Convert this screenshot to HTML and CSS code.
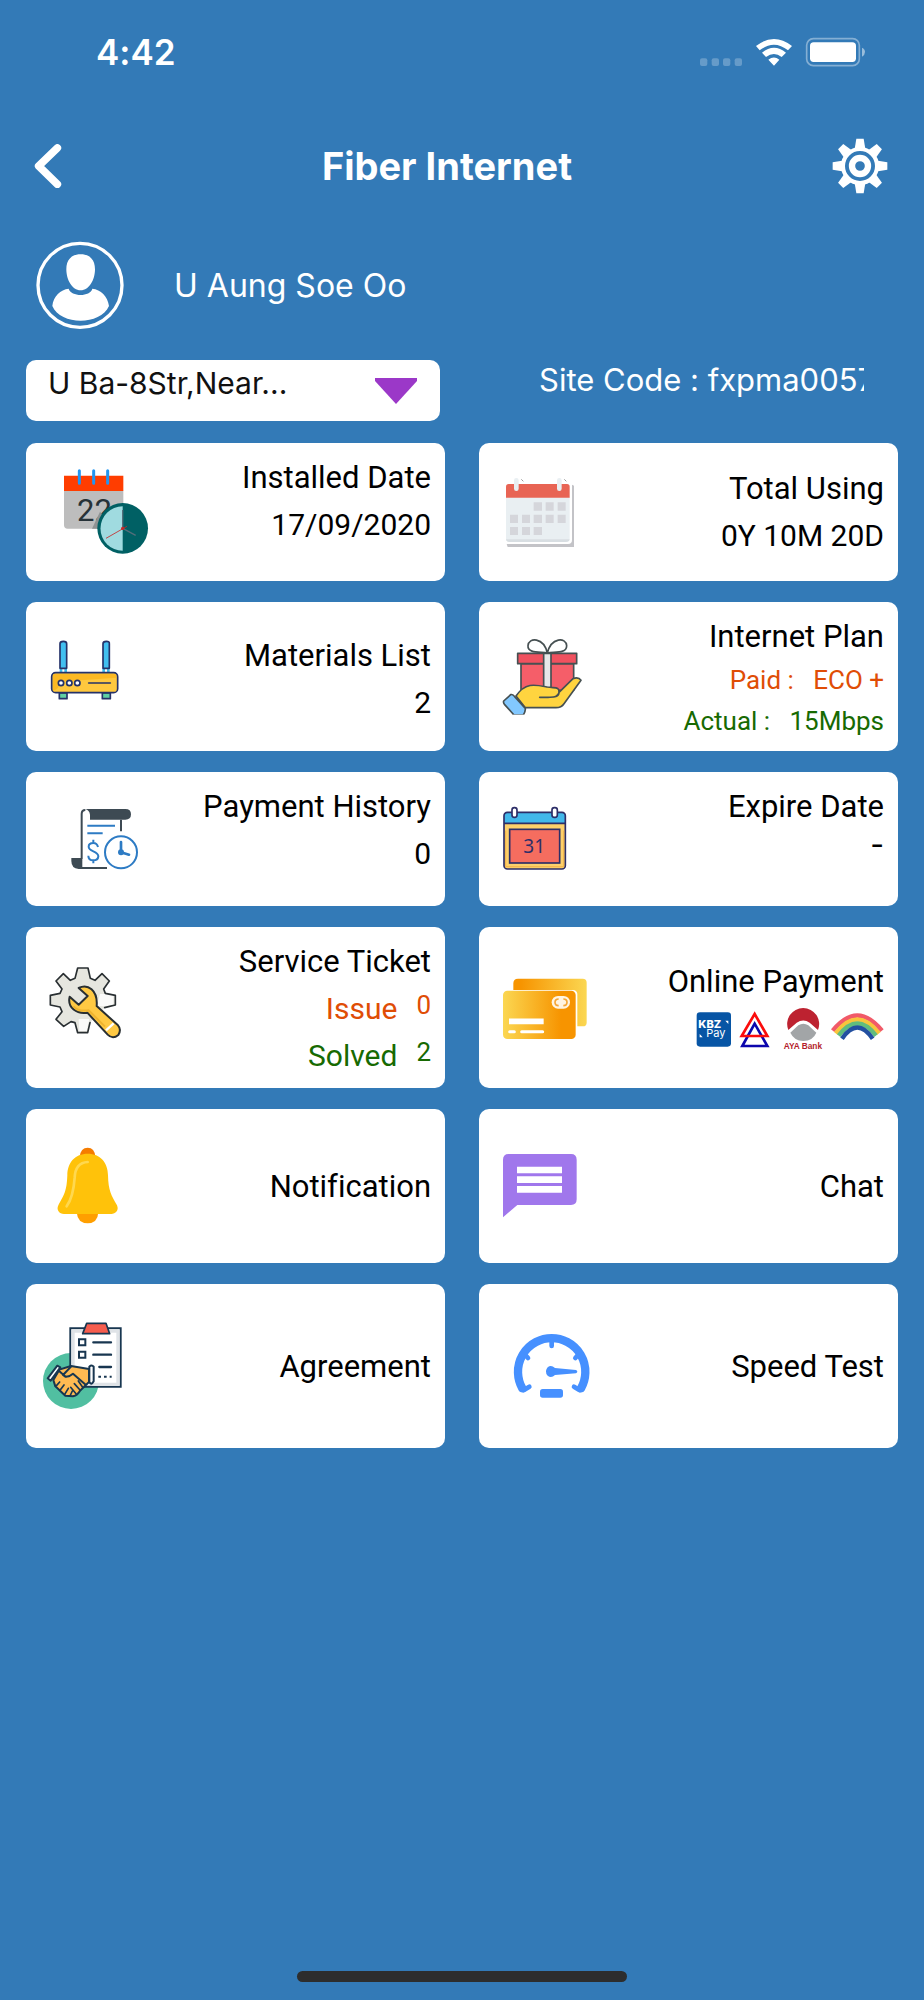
FILE: index.html
```html
<!DOCTYPE html>
<html lang="en">
<head>
<meta charset="utf-8">
<meta name="viewport" content="width=device-width, initial-scale=1">
<title>Fiber Internet</title>
<link rel="stylesheet" href="styles.css">
</head>
<body>
<div class="status">
  <span class="clock">4:42</span>
  <svg class="status-icons" viewBox="714 111 498 90" aria-hidden="true">
    <g fill="#fff" fill-opacity=".25"><rect x="714" y="175" width="22" height="23" rx="6"/><rect x="749" y="175" width="22" height="23" rx="6"/><rect x="783" y="175" width="22" height="23" rx="6"/><rect x="818" y="175" width="22" height="23" rx="6"/></g>
    <path fill="#fff" d="M882 138Q936 96 990 138L978 151Q936 117 893 151ZM900 158Q936 129 972 158L959 171Q936 153 912 171ZM919 179Q936 166 952 179L936 197Z"/>
    <rect x="1034" y="116" width="158" height="81" rx="20" fill="none" stroke="#fff" stroke-opacity=".4" stroke-width="5"/>
    <rect x="1044" y="127" width="138" height="59" rx="11" fill="#fff"/>
    <path fill="#fff" fill-opacity=".5" d="M1200 143Q1209 147 1209 156T1200 170Z"/>
  </svg>
</div>

<header class="header">
  <button class="icon-button back" type="button" aria-label="Back">
    <svg viewBox="102 432 84 134"><path d="M172 444L116 498L172 553" fill="none" stroke="#fff" stroke-width="23" stroke-linecap="round" stroke-linejoin="round"/></svg>
  </button>
  <h1 class="title">Fiber Internet</h1>
  <button class="icon-button settings" type="button" aria-label="Settings">
    <svg viewBox="-84 -84 168 168">
      <defs><path id="tooth" d="M-17 -45L-11 -82H11L17 -45Z"/></defs>
      <g fill="#fff"><use href="#tooth"/><use href="#tooth" transform="rotate(45)"/><use href="#tooth" transform="rotate(90)"/><use href="#tooth" transform="rotate(135)"/><use href="#tooth" transform="rotate(180)"/><use href="#tooth" transform="rotate(225)"/><use href="#tooth" transform="rotate(270)"/><use href="#tooth" transform="rotate(315)"/></g>
      <circle r="51" fill="#337ab7" stroke="#fff" stroke-width="12"/>
      <circle r="24" fill="none" stroke="#fff" stroke-width="19"/>
    </svg>
  </button>
</header>

<main class="main">
  <section class="profile">
    <svg class="avatar" viewBox="106 722 264 264" aria-hidden="true">
      <circle cx="238" cy="855" r="126" fill="none" stroke="#fff" stroke-width="10"/>
      <path fill="#fff" d="M240 762C269 762 283 780 283 807C283 838 266 870 240 870S197 838 197 807C197 780 211 762 240 762ZM204 865C211 890 269 890 275 865C300 868 321 887 325 917C299 976 180 976 155 917C158 887 180 868 204 865Z"/>
    </svg>
    <span class="name">U Aung Soe Oo</span>
  </section>

  <section class="site">
    <div class="select-wrap">
      <select class="select" aria-label="Site address"><option>U Ba-8Str,Near...</option></select>
      <svg class="caret" viewBox="0 0 42 26" aria-hidden="true"><path d="M0 0H42V3L21 26L0 3Z" fill="#9b38c8"/></svg>
    </div>
    <p class="code">Site Code : fxpma0057</p>
  </section>

  <section class="grid">
    <a class="card row-1 top" href="#installed">
      <svg class="art" viewBox="108 336 360 360" aria-hidden="true">
        <path d="M192 452H370V566H203Q192 566 192 555Z" fill="#bdbdbd"/>
        <path d="M192 407H370V453H192Z" fill="#ff3d00"/>
        <path d="M238 392V430M281 392V430M323 392V430" stroke="#2196f3" stroke-width="9" stroke-linecap="round"/>
        <text x="231" y="542" font-size="93" fill="#263238" class="roboto">22</text>
        <path d="M276 566L300 515L340 566Z" fill="#8f9293"/>
        <circle cx="368" cy="565" r="76" fill="#006064"/>
        <path d="M368 499A66 66 0 0 0 368 632Z" fill="#a0dbe0"/>
        <path d="M368 510V565L407 586" fill="none" stroke="#546e7a" stroke-width="4"/>
        <path d="M318 595L381 559" stroke="#c62828" stroke-width="2.500"/><circle cx="368" cy="565" r="5" fill="#c62828"/>
      </svg>
      <div class="info"><span class="label">Installed Date</span><span>17/09/2020</span></div>
    </a>

    <a class="card row-1" href="#total">
      <svg class="art" viewBox="81 336 360 360" aria-hidden="true">
        <path d="M134 612H318Q330 612 330 600V434L336 437V621H137Z" fill="#c3c3c7"/>
        <path d="M132 470H323V595Q323 606 311 606H143Q132 606 132 595Z" fill="#e9eff2"/>
        <path d="M132 598H323Q322 606 311 606H143Q133 606 132 598Z" fill="#d8dee2"/>
        <path d="M132 473V440Q132 432 140 432H315Q323 432 323 440V473Z" fill="#e86454"/>
        <path d="M163 421V446M292 421V446" stroke="#e9eff2" stroke-width="14" stroke-linecap="round"/>
        <path d="M178 418L184 424M307 418L313 424" stroke="#999" stroke-width="3"/>
        <path fill="#d5d6db" d="M215 487h25v25h-25zM251 487h24v25h-24zM287 487h24v25h-24zM144 524h24v25h-24zM180 524h24v25h-24zM215 524h25v25h-25zM251 524h24v25h-24zM287 524h24v25h-24zM144 561h24v24h-24zM180 561h24v24h-24zM215 561h25v24h-25z"/>
      </svg>
      <div class="info"><span class="label">Total Using</span><span>0Y 10M 20D</span></div>
    </a>

    <a class="card row-2" href="#materials">
      <svg class="art" viewBox="108 80 360 360" aria-hidden="true">
        <g stroke="#253269" stroke-width="5" stroke-linejoin="round">
          <path d="M183 234V245M197 234V245M311 234V245M325 234V245" stroke="#41bff0" stroke-width="8"/>
          <path d="M180 234V160Q180 153 190 153T200 160V234ZM309 234V160Q309 153 319 153T328 160V234Z" fill="#41bff0"/>
          <path d="M178 308H201V325H178ZM307 308H331V325H307Z" fill="#5fd0a3"/>
          <rect x="155" y="247" width="198" height="60" rx="12" fill="#ffc83e"/>
          <path d="M159 300V255Q160 251 166 251H348V262L180 274Q179 296 159 301Z" fill="#fbb51d" stroke="none" opacity=".8"/>
          <g fill="#fff"><circle cx="183" cy="278" r="8"/><circle cx="208" cy="278" r="8"/><circle cx="232" cy="278" r="8"/></g>
          <path d="M266 278H331" stroke-linecap="round"/>
        </g>
      </svg>
      <div class="info low"><span class="label">Materials List</span><span>2</span></div>
    </a>

    <a class="card row-2" href="#plan">
      <svg class="art" viewBox="81 80 360 360" aria-hidden="true">
        <g stroke="#465052" stroke-width="5" stroke-linejoin="round" stroke-linecap="round">
          <path d="M256 188C245 140 200 140 198 166C196 190 235 184 256 188C268 140 312 140 314 166C314 190 280 184 256 188Z" fill="#fff"/>
          <path d="M177 220H335V300H177Z" fill="#f55e69"/>
          <path d="M167 189H344V220H167Z" fill="#f0515f"/>
          <path d="M245 189H267V300H245Z" fill="#e6e7e8"/>
          <path d="M162 317C190 275 220 283 256 290C280 294 292 288 291 306C290 322 272 320 258 321H233H258C272 320 287 322 291 306L333 265Q349 258 357 270L306 340Q298 352 282 352H190Z" fill="#ffd43f"/>
          <path d="M125 332L146 313Q153 311 158 319L190 354Q191 362 184 374H156L128 343Q123 337 125 332Z" fill="#82c8ff"/>
        </g>
        <path d="M153 375H190" stroke="#fff" stroke-width="4"/>
      </svg>
      <div class="info high"><span class="label">Internet Plan</span><span class="small paid">Paid : &nbsp; ECO +</span><span class="small ok">Actual : &nbsp; 15Mbps</span></div>
    </a>

    <a class="card row-3 top" href="#history">
      <svg class="art" viewBox="108 567 360 360" aria-hidden="true">
        <path d="M256 657H376Q393 657 393 673T376 689H270V674Q268 660 256 657Z" fill="#3d4a53"/>
        <path d="M245 806V672Q245 660 256 660M363 689V724M236 834H321" fill="none" stroke="#3d4a53" stroke-width="6"/>
        <path d="M214 804H247V837H236Q214 835 214 813Z" fill="#3d4a53"/>
        <g fill="none" stroke="#2d7bc4" stroke-width="6"><path d="M262 707H345M262 730H308"/><circle cx="363" cy="787" r="48"/><path d="M294 771Q291 759 280 759Q266 759 266 770C266 786 295 782 295 799Q294 811 280 811Q265 811 265 797M280 749V759M280 811V820"/></g>
        <path d="M363 756V787L387 794" fill="none" stroke="#2d7bc4" stroke-width="8" stroke-linecap="round"/><circle cx="363" cy="787" r="9" fill="#2d7bc4"/>
      </svg>
      <div class="info"><span class="label">Payment History</span><span>0</span></div>
    </a>

    <a class="card row-3 top" href="#expire">
      <svg class="art" viewBox="81 567 360 360" aria-hidden="true">
        <rect x="126" y="667" width="184" height="170" rx="10" fill="#fdd06a"/>
        <path d="M126 700V677Q126 667 136 667H300Q310 667 310 677V700Z" fill="#42b8ea"/>
        <g fill="none" stroke="#2d2e68" stroke-width="5"><rect x="126" y="667" width="184" height="170" rx="10"/><path d="M126 700H310"/><rect x="143" y="718" width="150" height="101" fill="#f56d5f"/><rect x="150" y="653" width="15" height="29" rx="7" fill="#fff"/><rect x="270" y="653" width="16" height="29" rx="7" fill="#fff"/></g>
        <path d="M131 722V830H305V722" fill="none" stroke="#f3b44b" stroke-width="3"/>
        <text x="184" y="789" font-size="57" fill="#2d2e68" class="noto">31</text>
      </svg>
      <div class="info"><span class="label">Expire Date</span><span class="dash">-</span></div>
    </a>

    <a class="card row-4 top" href="#service">
      <svg class="art" viewBox="108 112 360 360" aria-hidden="true">
        <path d="M225 203L233 172H264L271 203L285 209L306 189L328 211L311 235L316 248L346 254V283L314 291L270 336L263 366H233L225 336L213 333L191 347L168 326L186 303L180 289L151 283V254L180 248L186 235L168 211L190 189L211 209Z" fill="#e6e6df"/>
        <path d="M300 250H340V282L314 287L290 285ZM236 325H268L260 361H238Z" fill="#fff" opacity=".8"/>
        <path d="M314 291L346 283V254L316 248L311 235L328 211L306 189L285 209L271 203L264 172H233L225 203L211 209L190 189L168 211L186 235L180 248L151 254V283L180 289L186 303L168 326L191 347L213 333L225 336L233 366H263L270 336" fill="none" stroke="#292f32" stroke-width="5" stroke-linejoin="round" stroke-linecap="round"/>
        <path d="M236 232C263 218 294 238 290 286L354 344Q365 356 355 373Q338 387 323 372L262 306C231 311 201 292 209 258L236 282L263 256Z" fill="#ffc943" stroke="#292f32" stroke-width="6" stroke-linejoin="round"/>
        <path d="M220 287Q235 303 266 299L315 348" fill="none" stroke="#eeb32f" stroke-width="6"/>
        <path d="M318 359L341 338" stroke="#fff" stroke-width="7"/>
      </svg>
      <div class="info"><span class="label">Service Ticket</span>
        <span class="pair paid">Issue<span class="count">0</span></span>
        <span class="pair ok">Solved<span class="count">2</span></span>
      </div>
    </a>

    <a class="card row-4" href="#payment">
      <svg class="art" viewBox="81 112 360 360" aria-hidden="true">
        <defs>
          <linearGradient id="gold-front"><stop stop-color="#fbd752"/><stop offset=".8" stop-color="#f79400"/></linearGradient>
          <linearGradient id="gold-back"><stop offset=".1" stop-color="#f79400"/><stop offset="1" stop-color="#fbd752"/></linearGradient>
        </defs>
        <path d="M154 238V218Q154 204 168 204H362Q374 204 374 216V336Q374 347 362 347H346V249Q344 238 333 238Z" fill="url(#gold-back)"/>
        <rect x="123" y="240" width="218" height="145" rx="13" fill="url(#gold-front)"/>
        <rect x="269" y="256" width="55" height="38" rx="19" fill="#fff4e2"/>
        <g fill="none" stroke="#f5a637" stroke-width="5"><path d="M290 265Q279 265 279 275T290 285M304 265Q315 265 315 275T304 285"/></g>
        <path d="M141 332H245" stroke="#fff" stroke-width="17"/><path d="M143 363H157M179 363H242" stroke="#fff" stroke-width="9" stroke-linecap="round"/>
      </svg>
      <div class="info raised"><span class="label">Online Payment</span>
        <svg class="banks" viewBox="704 282 564 141" role="img" aria-label="KBZ Pay, AYA Bank">
          <rect x="706" y="304" width="103" height="103" rx="10" fill="#0755a5"/>
          <text x="711" y="351" font-size="33" font-weight="800" fill="#fff" class="inter">KBZ</text>
          <text x="735" y="379" font-size="33" fill="#fff" class="inter">Pay</text>
          <path d="M792 329H801V339ZM715 369V379H724Z" fill="#fff"/>
          <path d="M880 338L843 405H918Z" fill="none" stroke="#0c06ad" stroke-width="8"/>
          <path d="M880 309L841 375H918Z" fill="none" stroke="#fb0c0c" stroke-width="8"/>
          <path d="M981 357A48 48 0 1 1 1070 357L1045 335Q1026 322 1006 335Z" fill="#bd2230"/>
          <path d="M987 365L1011 343Q1026 333 1041 343L1065 365Q1055 389 1026 390Q998 389 987 365Z" fill="#a2a5a7"/>
          <text x="967" y="414" font-size="25" font-weight="700" fill="#b41e2c" class="liberation">AYA Bank</text>
          <g fill="none" stroke-width="13"><path d="M1114 359Q1188 268 1262 359" stroke="#f15a68"/><path d="M1123 367Q1188 284 1253 367" stroke="#f8c53c"/><path d="M1132 374Q1188 301 1244 374" stroke="#61bd7d"/><path d="M1142 383Q1188 316 1234 383" stroke="#2350a0"/></g>
        </svg>
      </div>
    </a>

    <a class="card row-5" href="#notification">
      <svg class="art" viewBox="108 648 360 360" aria-hidden="true">
        <path d="M239 740Q242 713 263 713T286 740Z" fill="#f57c00"/>
        <path d="M230 907H295Q293 940 263 940T230 907Z" fill="#ff9f00"/>
        <path d="M263 731C301 731 324 758 324 796C325 842 334 856 351 886C358 902 346 912 334 912H192C178 912 168 900 175 886C193 853 200 844 202 796C202 758 225 731 263 731Z" fill="#ffc20a"/>
        <path d="M263 756Q226 758 224 803Q220 861 200 889" fill="none" stroke="#ffd84f" stroke-width="8" stroke-linecap="round"/>
      </svg>
      <div class="info"><span class="label">Notification</span></div>
    </a>

    <a class="card row-5" href="#chat">
      <svg class="art" viewBox="81 648 360 360" aria-hidden="true">
        <path d="M123 922V749Q123 732 140 732H327Q344 732 344 749V868Q344 885 327 885H166Z" fill="#a077ec"/>
        <path d="M165 770H300V790H165ZM165 799H300V819H165ZM165 828H300V848H165Z" fill="#fff"/>
      </svg>
      <div class="info"><span class="label">Chat</span></div>
    </a>

    <a class="card row-6" href="#agreement">
      <svg class="art" viewBox="108 138 360 360" aria-hidden="true">
        <circle cx="213" cy="363" r="84" fill="#51bfa1"/>
        <path d="M211 205H362V380H211Z" fill="#fff" stroke="#183650" stroke-width="6"/>
        <path d="M219 320V213H354V373H275" fill="none" stroke="#dfe3e7" stroke-width="10"/>
        <path d="M260 190H318L329 221H248Z" fill="#f65d4e" stroke="#183650" stroke-width="5" stroke-linejoin="round"/>
        <g fill="none" stroke="#183650" stroke-width="6"><path d="M237 238H256V256H237ZM237 275H256V293H237Z"/><path d="M280 247H333M280 284H333M298 321H333" stroke-width="7" stroke-linecap="round"/><path d="M295 350H335" stroke-dasharray="8 9"/></g>
        <g stroke="#183650" stroke-width="6" stroke-linejoin="round" stroke-linecap="round">
          <path d="M178 329L213 318L267 327V366L240 392Q233 405 219 409L196 407L166 379L160 360Z" fill="#ffba52"/>
          <path d="M143 355L172 317L181 322L152 362ZM268 320Q275 313 281 320V364Q274 377 268 366Z" fill="#fff"/>
          <path d="M178 334L197 350Q207 351 219 341L257 374M207 349L196 350L189 345L213 320" fill="none"/>
          <path d="M179 366L170 376M192 375L180 391M205 385L194 403M217 393L210 408M223 371L240 390M212 382L228 401M235 363L248 382" fill="none" stroke-width="5"/>
        </g>
      </svg>
      <div class="info"><span class="label">Agreement</span></div>
    </a>

    <a class="card row-6" href="#speed">
      <svg class="art" viewBox="81 138 360 360" aria-hidden="true">
        <g fill="none" stroke="#4690ff" stroke-linecap="round">
          <path d="M181 385A101 101 0 1 1 357 385" stroke-width="25"/>
          <path d="M269 245V258M192 287L198 294M346 287L340 294M186 390L202 380M352 390L336 380" stroke-width="14"/>
        </g>
        <path d="M257 322Q267 313 279 324L342 330Q350 335 342 340L279 345Q268 356 257 347Q246 335 257 322Z" fill="#4690ff"/>
        <rect x="234" y="387" width="69" height="26" rx="8" fill="#4690ff"/>
      </svg>
      <div class="info"><span class="label">Speed Test</span></div>
    </a>
  </section>
</main>
<div class="home-bar"></div>
</body>
</html>
```

FILE: styles.css
```css
* { box-sizing: border-box; }

body {
  margin: 0;
  min-height: 100vh;
  display: flex;
  flex-direction: column;
  background: #337ab7;
  color: #fff;
  font-family: Inter, "Liberation Sans", sans-serif;
  font-variant-ligatures: none;
}

.status {
  display: flex;
  align-items: center;
  justify-content: space-between;
  height: 104px;
  padding: 0 58px 0 96px;
}
.clock { font-size: 35px; font-weight: 600; }
.status-icons { width: 166px; height: 30px; }

.header {
  display: flex;
  align-items: center;
  height: 124px;
  padding: 0 36px 0 34px;
}
.title {
  flex: 1;
  margin: 0;
  text-align: center;
  font-size: 38px;
  font-weight: 700;
}
.icon-button {
  display: block;
  padding: 0;
  border: 0;
  background: none;
}
.icon-button svg { display: block; width: 100%; }
.back { width: 28px; }
.settings { width: 56px; }

.main { padding: 13px 26px 0; }

.profile {
  display: flex;
  align-items: center;
  gap: 50px;
  padding-left: 10px;
}
.avatar { width: 88px; height: 88px; }
.name {
  white-space: nowrap;
  font-size: 32px;
  font-weight: 400;
}

.site {
  display: grid;
  grid-template-columns: 1fr 1fr;
  column-gap: 34px;
  margin-top: 31px;
}
.select-wrap { position: relative; margin-right: 5px; }
.select {
  display: block;
  width: 100%;
  height: 61px;
  padding: 0 80px 15px 22px;
  border: 0;
  border-radius: 10px;
  background: #fff;
  color: #111;
  font: 400 30px Inter, "Liberation Sans", sans-serif;
  appearance: none;
}
.caret {
  position: absolute;
  top: 18px;
  right: 23px;
  width: 42px;
  height: 26px;
  pointer-events: none;
}
.code {
  margin: 0 34px 0 60px;
  overflow: hidden;
  white-space: nowrap;
  font-size: 31px;
  font-weight: 400;
  line-height: 40px;
}

.grid {
  display: grid;
  grid-template-columns: 1fr 1fr;
  gap: 21px 34px;
  margin-top: 22px;
}
.card {
  display: flex;
  align-items: center;
  justify-content: space-between;
  padding: 0 14px 0 10px;
  border-radius: 10px;
  background: #fff;
  color: #000;
  text-decoration: none;
  font-family: Roboto, "Liberation Sans", sans-serif;
  font-size: 30px;
  line-height: 47px;
}
.row-1 { min-height: 138px; }
.row-2 { min-height: 149px; }
.row-3 { min-height: 134px; }
.row-4 { min-height: 161px; }
.row-5 { min-height: 154px; }
.row-6 { min-height: 164px; }

.art { flex: none; width: 120px; height: 120px; }
.info {
  display: flex;
  flex-direction: column;
  align-items: flex-end;
  white-space: nowrap;
}
.label { font-size: 31px; }
.top .info, .high { align-self: flex-start; padding-top: 11px; }
.low { padding-top: 4px; }
.raised { padding-bottom: 5px; }
.small { font-size: 26px; line-height: 41px; }
.paid { color: #e04d05; }
.ok { color: #176a02; }
.pair { display: flex; gap: 19px; }
.count { font-size: 26px; line-height: 41px; }
.dash { font-family: Inter, sans-serif; line-height: 28px; }
.banks { display: block; width: 188px; height: 47px; }

.roboto { font-family: Roboto, sans-serif; }
.noto { font-family: "Noto Sans", sans-serif; }
.inter { font-family: Inter, sans-serif; }
.liberation { font-family: "Liberation Sans", sans-serif; }

.home-bar {
  width: 330px;
  height: 11px;
  margin: auto auto 18px;
  border-radius: 6px;
  background: #2d2d2d;
}
```
